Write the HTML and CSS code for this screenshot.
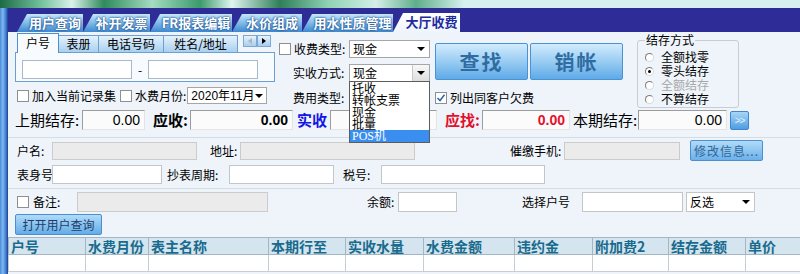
FILE: index.html
```html
<!DOCTYPE html>
<html lang="zh-CN">
<head>
    <meta charset="UTF-8">
    <title>大厅收费</title>
    <link rel="stylesheet" href="styles.css">
</head>
<body>
    <div class="banner"></div>
    <div class="frame">
        <div class="strip"></div>
        <div class="main">
            <div class="tabbar">
                <span class="tab">用户查询</span>
                <span class="tab">补开发票</span>
                <span class="tab">FR报表编辑</span>
                <span class="tab">水价组成</span>
                <span class="tab">用水性质管理</span>
                <span class="tab active">大厅收费</span>
            </div>

            <div class="content">
                <div class="top">
                    <!-- search by account -->
                    <div class="search">
                        <div class="subtabs">
                            <span class="subtab active">户号</span>
                            <span class="subtab">表册</span>
                            <span class="subtab">电话号码</span>
                            <span class="subtab">姓名/地址</span>
                            <span class="scroller">
                                <i class="arr arr-left"></i>
                                <i class="arr arr-right"></i>
                            </span>
                        </div>
                        <div class="panel">
                            <input type="text" class="txt range">
                            <span class="dash">-</span>
                            <input type="text" class="txt range">
                        </div>
                        <div class="opts">
                            <span class="chk"></span>
                            <span class="opt-label">加入当前记录集</span>
                            <span class="chk"></span>
                            <span class="opt-label">水费月份:</span>
                            <div class="select month">2020年11月<span class="caret"></span></div>
                        </div>
                    </div>

                    <!-- fee options -->
                    <div class="fees">
                        <div class="fee-row first">
                            <span class="chk"></span>
                            <span class="fee-label">收费类型:</span>
                            <div class="select fee">现金<span class="caret"></span></div>
                        </div>
                        <div class="fee-row">
                            <span class="fee-label indent">实收方式:</span>
                            <div class="select fee open">现金<span class="drop-btn"><span class="caret"></span></span>
                                <ul class="droplist">
                                    <li>托收</li>
                                    <li>转帐支票</li>
                                    <li>现金</li>
                                    <li>批量</li>
                                    <li class="hl">POS机</li>
                                </ul>
                            </div>
                        </div>
                        <div class="fee-row">
                            <span class="fee-label indent">费用类型:</span>
                        </div>
                    </div>

                    <div class="actions">
                        <div class="bigbtns">
                            <button class="big">查找</button>
                            <button class="big">销帐</button>
                        </div>
                        <div class="listdebt">
                            <span class="chk on"><svg width="10" height="10" viewBox="0 0 10 10"><path d="M1.5 5 L4 7.5 L8.5 1.8" stroke="#2b63b3" stroke-width="1.5" fill="none"/></svg></span>
                            <span class="opt-label">列出同客户欠费</span>
                        </div>
                    </div>

                    <fieldset class="balance">
                        <legend>结存方式</legend>
                        <div class="radio"><span class="dot"></span>全额找零</div>
                        <div class="radio"><span class="dot on"></span>零头结存</div>
                        <div class="radio off"><span class="dot"></span>全额结存</div>
                        <div class="radio"><span class="dot"></span>不算结存</div>
                    </fieldset>
                </div>

                <div class="totals">
                    <span class="t-label prev">上期结存:</span>
                    <input type="text" class="num prev-val" value="0.00">
                    <span class="t-label due">应收:</span>
                    <input type="text" class="num due-val" value="0.00">
                    <span class="t-label paid">实收</span>
                    <input type="text" class="num paid-val" value="">
                    <span class="t-label change">应找:</span>
                    <input type="text" class="num change-val" value="0.00">
                    <span class="t-label cur">本期结存:</span>
                    <input type="text" class="num cur-val" value="0.00">
                    <button class="more">&gt;&gt;</button>
                </div>

                <div class="info">
                    <div class="row row-name">
                        <span class="lbl l-name">户名:</span>
                        <input type="text" class="txt off i-name">
                        <span class="lbl l-addr">地址:</span>
                        <input type="text" class="txt off i-addr">
                        <span class="lbl l-phone">催缴手机:</span>
                        <input type="text" class="txt off i-phone">
                        <button class="edit-btn">修改信息...</button>
                    </div>
                    <div class="row row-meter">
                        <span class="lbl l-meter">表身号</span>
                        <input type="text" class="txt i-meter">
                        <span class="lbl l-cycle">抄表周期:</span>
                        <input type="text" class="txt i-cycle">
                        <span class="lbl l-tax">税号:</span>
                        <input type="text" class="txt i-tax">
                    </div>
                </div>

                <div class="info second">
                    <div class="row row-note">
                        <span class="chk"></span>
                        <span class="lbl l-note">备注:</span>
                        <input type="text" class="txt off i-note">
                        <span class="lbl l-rest">余额:</span>
                        <input type="text" class="txt i-rest">
                        <span class="lbl l-pick">选择户号</span>
                        <input type="text" class="txt i-pick">
                        <div class="select invert">反选<span class="caret"></span></div>
                    </div>
                </div>

                <button class="open-btn">打开用户查询</button>

                <table class="grid">
                    <colgroup>
                        <col class="c1"><col class="c2"><col class="c3"><col class="c4"><col class="c5">
                        <col class="c6"><col class="c7"><col class="c8"><col class="c9"><col class="c10">
                    </colgroup>
                    <tr>
                        <th>户号</th><th>水费月份</th><th>表主名称</th><th>本期行至</th><th>实收水量</th>
                        <th>水费金额</th><th>违约金</th><th>附加费2</th><th>结存金额</th><th>单价</th>
                    </tr>
                    <tr>
                        <td></td><td></td><td></td><td></td><td></td>
                        <td></td><td></td><td></td><td></td><td></td>
                    </tr>
                </table>
            </div>
        </div>
    </div>
</body>
</html>
```

FILE: styles.css
```css
body {
    margin: 0;
    width: 800px;
    height: 274px;
    overflow: hidden;
    font-family: "Noto Sans CJK SC", "Liberation Sans", sans-serif;
    font-size: 12px;
    line-height: 14px;
    color: #000;
    background-color: #eef4fa;
}

.banner {
    height: 8px;
    background: linear-gradient(90deg, #1d6b45 0, #6fbf9a 5%, #d9f3ea 9%, #2f8a5c 13%, #a5dcc2 19%,
        #3c9a6c 25%, #e0f5ef 29%, #2f7f58 35%, #8fd2b4 41%, #d5efe8 47%, #5fae8a 52%,
        #d6f1ef 58%, #d6f1ef 100%);
}

.frame {
    display: flex;
    height: 266px;
}

.strip {
    width: 8px;
    flex: none;
    background: linear-gradient(90deg, #4a8ad8, #7fb8f0 35%, #3d7ad0 75%, #1e3f90);
}

.main {
    flex: 1;
    min-width: 0;
    display: flex;
    flex-direction: column;
}

/* top tab bar */
.tabbar {
    height: 24px;
    background-color: #2e2d98;
    display: flex;
    align-items: flex-end;
    padding-left: 9px;
}

.tab {
    flex: none;
    height: 18px;
    line-height: 18px;
    box-sizing: border-box;
    padding-left: 10px;
    text-align: center;
    clip-path: polygon(10px 0, 100% 0, 100% 100%, 0 100%);
    background: linear-gradient(#c7e6f9, #86c0ea 45%, #3f88cf);
    color: #fff;
    font-size: 13px;
    font-weight: bold;
    text-shadow: 0 0 2px #1b4f8f, 0 0 2px #1b4f8f;
}

.tab:nth-child(1) { width: 66px; }
.tab:nth-child(2) { width: 67px; }
.tab:nth-child(3) { width: 82px; }
.tab:nth-child(4) { width: 70px; }
.tab:nth-child(5) { width: 91px; }
.tab:nth-child(6) { width: 67px; }

.tab.active {
    height: 19px;
    background: linear-gradient(#ffffff, #eef5fc);
    color: #1f2a9c;
    text-shadow: none;
}

.content {
    flex: 1;
    background-color: #eef4fa;
}

/* upper block */
.top {
    display: flex;
    height: 76px;
    padding-left: 7px;
}

.search {
    width: 262px;
    flex: none;
}

.subtabs {
    display: flex;
    align-items: flex-end;
    height: 20px;
    padding-left: 2px;
}

.subtab {
    flex: none;
    height: 17px;
    line-height: 16px;
    box-sizing: border-box;
    border: 1px solid #6c9fd2;
    border-bottom: none;
    margin-right: -1px;
    background: linear-gradient(#e4f2fc, #a9d0ef);
    text-align: center;
}

.subtab:nth-child(1) { width: 42px; }
.subtab:nth-child(2) { width: 41px; }
.subtab:nth-child(3) { width: 66px; }
.subtab:nth-child(4) { width: 75px; }

.subtab.active {
    height: 20px;
    line-height: 18px;
    margin-bottom: -1px;
    position: relative;
    z-index: 1;
    background: #f8fbfe;
    border-color: #4f8fd0;
}

.scroller {
    display: flex;
    margin: 0 0 5px 6px;
}

.arr {
    width: 14px;
    height: 12px;
    box-sizing: border-box;
    border: 1px solid #7ba9d6;
    background: linear-gradient(#e6f3fc, #a8cdec);
    display: flex;
    align-items: center;
    justify-content: center;
}

.arr::after {
    content: "";
    border-top: 3px solid transparent;
    border-bottom: 3px solid transparent;
}

.arr-left::after {
    border-right: 4px solid #a9b6c2;
}

.arr-right::after {
    border-left: 4px solid #000;
}

.panel {
    width: 260px;
    height: 30px;
    box-sizing: border-box;
    border: 1px solid #6c9fd2;
    background: #f8fbfe;
    display: flex;
    align-items: flex-start;
    padding: 7px 0 0 6px;
}

.txt {
    height: 19px;
    box-sizing: border-box;
    border: 1px solid #c3c6c9;
    background: #fff;
    padding: 0 3px;
    margin: 0;
    font: inherit;
    flex: none;
}

.txt.off {
    background: #ebebeb;
    border-color: #cbcbcb;
}

.panel .range {
    width: 110px;
    border-color: #a9b9c9;
}

.dash {
    width: 16px;
    text-align: center;
    line-height: 19px;
}

.opts {
    display: flex;
    align-items: center;
    height: 17px;
    margin-top: 5px;
    padding-left: 2px;
}

.chk {
    width: 12px;
    height: 12px;
    flex: none;
    box-sizing: border-box;
    border: 1px solid #8e8f90;
    background: #fff;
    display: flex;
    align-items: center;
    justify-content: center;
}

.opt-label {
    margin: 0 4px 0 3px;
    white-space: nowrap;
}

.select {
    height: 17px;
    box-sizing: border-box;
    border: 1px solid #a6a6a6;
    background: #fff;
    display: flex;
    align-items: center;
    padding-left: 3px;
    position: relative;
    flex: none;
    white-space: nowrap;
}

.caret {
    margin-left: auto;
    margin-right: 4px;
    border-left: 4px solid transparent;
    border-right: 4px solid transparent;
    border-top: 4px solid #000;
}

.month {
    width: 80px;
    margin-left: -3px;
    font-family: "Liberation Sans", "Noto Sans CJK SC", sans-serif;
}

/* fee column */
.fees {
    width: 156px;
    flex: none;
    margin-left: 2px;
}

.fee-row {
    display: flex;
    align-items: center;
    height: 18px;
    margin-top: 6px;
}

.fee-row.first {
    margin-top: 8px;
}

.fee-row:last-child {
    margin-top: 7px;
}

.fee-label {
    width: 55px;
    flex: none;
    padding-left: 3px;
    white-space: nowrap;
}

.fee-label.indent {
    width: 56px;
    padding-left: 14px;
}

.select.fee {
    width: 81px;
    height: 18px;
}

.drop-btn {
    margin-left: auto;
    width: 17px;
    height: 100%;
    box-sizing: border-box;
    border-left: 1px solid #c9c9c9;
    background: linear-gradient(#f8f8f8, #dedede);
    display: flex;
    align-items: center;
    justify-content: center;
}

.drop-btn .caret {
    margin: 0;
}

.droplist {
    position: absolute;
    top: 16px;
    left: -1px;
    width: 81px;
    box-sizing: border-box;
    margin: 0;
    padding: 0;
    list-style: none;
    border: 1px solid #5c5c5c;
    background: #fff;
    z-index: 5;
}

.droplist li {
    height: 12px;
    line-height: 12px;
    padding-left: 2px;
}

.droplist li.hl {
    background: #3a8ef0;
    color: #fff;
    font-family: "Liberation Serif", "Noto Sans CJK SC", serif;
}

/* big buttons */
.actions {
    width: 188px;
    flex: none;
}

.bigbtns {
    display: flex;
    gap: 2px;
    margin-top: 11px;
}

.big {
    width: 93px;
    height: 37px;
    border: 1px solid #4b92d4;
    border-radius: 2px;
    background: linear-gradient(#d2ecfd, #99ccf2 50%, #5eaae8);
    color: #2f6ca2;
    font-family: "Noto Sans CJK SC", sans-serif;
    font-size: 20px;
    font-weight: bold;
    letter-spacing: 2px;
    padding: 0;
}

.listdebt {
    display: flex;
    align-items: center;
    margin-top: 12px;
    height: 12px;
}

/* balance radio group */
.balance {
    width: 102px;
    box-sizing: border-box;
    margin: 2px 0 0 14px;
    padding: 0 0 1px 7px;
    border: 1px solid #c6cdd6;
    border-radius: 3px;
}

.balance legend {
    padding: 0 1px;
    line-height: 12px;
}

.radio {
    display: flex;
    align-items: center;
    height: 14px;
    white-space: nowrap;
}

.radio:first-of-type {
    margin-top: 4px;
}

.radio.off {
    color: #a8a8a8;
}

.dot {
    width: 9px;
    height: 9px;
    box-sizing: border-box;
    border-radius: 50%;
    border: 1px solid;
    border-color: #7c7c7c #dadada #dadada #7c7c7c;
    background: #fff;
    margin-right: 7px;
    display: flex;
    align-items: center;
    justify-content: center;
}

.dot.on::after {
    content: "";
    width: 3px;
    height: 3px;
    border-radius: 50%;
    background: #000;
}

/* totals row */
.totals {
    display: flex;
    align-items: center;
    height: 20px;
    margin-top: 2px;
    padding-left: 7px;
    font-size: 15px;
}

.t-label {
    flex: none;
    white-space: nowrap;
}

.t-label.prev { width: 67px; }
.t-label.due { width: 37px; margin-left: 8px; font-weight: bold; }
.t-label.paid { width: 33px; margin-left: 4px; font-weight: bold; color: #1414e6; }
.t-label.change { width: 37px; margin-left: 8px; font-weight: bold; color: #e4102c; }
.t-label.cur { width: 65px; margin-left: 3px; }

.num {
    height: 20px;
    box-sizing: border-box;
    border: 1px solid;
    border-color: #9c9c9c #e4e4e4 #e4e4e4 #9c9c9c;
    background: #fbfbfb;
    margin: 0;
    padding: 0 4px 0 0;
    text-align: right;
    font-family: "Liberation Sans", sans-serif;
    font-size: 14px;
    color: #000;
    flex: none;
}

.prev-val { width: 63px; }
.due-val { width: 103px; font-weight: bold; }
.paid-val { width: 107px; }
.change-val { width: 88px; font-weight: bold; color: #e4102c; }
.cur-val { width: 89px; }

.more {
    width: 19px;
    height: 19px;
    margin-left: 3px;
    padding: 0;
    border: 1px solid #3f86cc;
    border-radius: 2px;
    background: linear-gradient(#a6d6f7, #4f9de2);
    color: #e6f3ff;
    font-family: "Liberation Sans", sans-serif;
    font-size: 10px;
    letter-spacing: -1px;
}

/* info rows */
.info {
    margin-top: 7px;
    border-top: 1px solid #d4dce4;
    padding-top: 2px;
}

.info.second {
    margin-top: 4px;
    padding-top: 3px;
}

.row {
    display: flex;
    align-items: center;
    height: 21px;
    padding-left: 9px;
}

.row-meter {
    height: 19px;
    margin-top: 4px;
}

.row-note {
    height: 20px;
}

.lbl {
    flex: none;
    white-space: nowrap;
}

.row-name .txt { height: 18px; }

.l-name { width: 35px; }
.i-name { width: 145px; }
.l-addr { width: 30px; margin-left: 13px; }
.i-addr { width: 175px; }
.l-phone { width: 54px; margin-left: 95px; }
.i-phone { width: 116px; }

.edit-btn {
    width: 73px;
    height: 21px;
    margin-left: 10px;
    padding: 0;
    border: 1px solid #4a90d0;
    border-radius: 2px;
    background: linear-gradient(#b0dbf8, #6cb0ea);
    color: #2f6796;
    font-family: "Noto Sans CJK SC", sans-serif;
    font-size: 12px;
    letter-spacing: 1px;
}

.l-meter { width: 35px; }
.i-meter { width: 110px; }
.l-cycle { width: 62px; margin-left: 5px; }
.i-cycle { width: 105px; }
.l-tax { width: 38px; margin-left: 9px; }
.i-tax { width: 164px; }

.row-note .txt { height: 20px; }

.l-note { width: 44px; margin-left: 4px; }
.i-note { width: 191px; }
.l-rest { width: 31px; margin-left: 99px; }
.i-rest { width: 59px; }
.l-pick { width: 60px; margin-left: 65px; }
.i-pick { width: 101px; }

.select.invert {
    width: 69px;
    height: 20px;
    margin-left: 3px;
    border-color: #c3c6c9;
}

.open-btn {
    display: block;
    width: 87px;
    height: 21px;
    margin: 2px 0 0 7px;
    padding: 0;
    border: 1px solid #4a90d0;
    border-radius: 2px;
    background: linear-gradient(#b0dbf8, #64ace8);
    color: #1f3c68;
    font-family: "Noto Sans CJK SC", sans-serif;
    font-size: 12px;
}

/* result grid */
.grid {
    margin-top: 2px;
    width: 794px;
    border-collapse: collapse;
    table-layout: fixed;
}

.c1 { width: 77px; }
.c2 { width: 63px; }
.c3 { width: 120px; }
.c4 { width: 77px; }
.c5 { width: 78px; }
.c6 { width: 91px; }
.c7 { width: 78px; }
.c8 { width: 76px; }
.c9 { width: 77px; }
.c10 { width: 77px; }

.grid th {
    height: 16px;
    padding: 0 1px 0 2px;
    background: #d4e5ef;
    border: 1px solid #a2b6c4;
    color: #186b8d;
    font-size: 14px;
    font-weight: bold;
    line-height: 16px;
    text-align: left;
    white-space: nowrap;
}

.grid td {
    height: 16px;
    padding: 0;
    background: #fff;
    border: 1px solid #c6cdd4;
}
```
